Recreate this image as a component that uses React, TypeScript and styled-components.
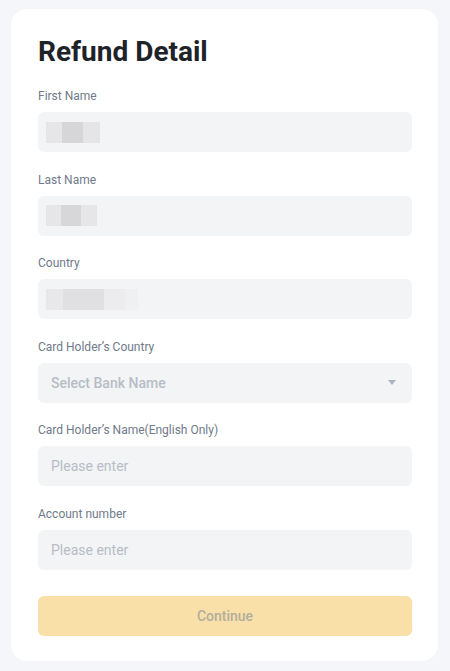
import React from 'react';
import styled, { createGlobalStyle } from 'styled-components';

const GlobalStyle = createGlobalStyle`
  html, body {
    margin: 0;
    padding: 0;
    background: #f5f6f9;
  }
  body {
    font-family: Roboto, 'Noto Sans', sans-serif;
    -webkit-font-smoothing: antialiased;
  }
`;

type Field = {
  label: string;
  kind: 'masked' | 'select' | 'text';
  value?: string;
  blocks?: { width: number; tone: string }[];
};

const fields: Field[] = [
  {
    label: 'First Name',
    kind: 'masked',
    blocks: [
      { width: 16, tone: '#e6e6e8' },
      { width: 21, tone: '#d6d6d9' },
      { width: 17, tone: '#e5e5e7' },
    ],
  },
  {
    label: 'Last Name',
    kind: 'masked',
    blocks: [
      { width: 15, tone: '#e6e6e8' },
      { width: 20, tone: '#d7d7da' },
      { width: 16, tone: '#e6e6e8' },
    ],
  },
  {
    label: 'Country',
    kind: 'masked',
    blocks: [
      { width: 17, tone: '#e8e8ea' },
      { width: 41, tone: '#e0e0e3' },
      { width: 21, tone: '#ececee' },
      { width: 13, tone: '#f0f0f2' },
    ],
  },
  { label: 'Card Holder’s Country', kind: 'select', value: 'Select Bank Name' },
  { label: 'Card Holder’s Name(English Only)', kind: 'text', value: 'Please enter' },
  { label: 'Account number', kind: 'text', value: 'Please enter' },
];

export default function App() {
  return (
    <>
      <GlobalStyle />
      <StyledPage>
        <StyledCard>
          <StyledTitle>Refund Detail</StyledTitle>
          <StyledFields>
            {fields.map((field) => (
              <StyledField key={field.label}>
                <StyledLabel>{field.label}</StyledLabel>
                <StyledInputBox>
                  {field.kind === 'masked' && (
                    <StyledMask>
                      {field.blocks!.map((b, i) => (
                        <StyledMaskBlock key={i} $width={b.width} $tone={b.tone} />
                      ))}
                    </StyledMask>
                  )}
                  {field.kind === 'select' && (
                    <>
                      <StyledSelectText>{field.value}</StyledSelectText>
                      <StyledCaret />
                    </>
                  )}
                  {field.kind === 'text' && <StyledPlaceholder>{field.value}</StyledPlaceholder>}
                </StyledInputBox>
              </StyledField>
            ))}
          </StyledFields>
          <StyledButton disabled>Continue</StyledButton>
        </StyledCard>
      </StyledPage>
    </>
  );
}

const StyledPage = styled.div`
  padding: 9px 12px 10px 11px;
`;

const StyledCard = styled.div`
  background: #ffffff;
  border-radius: 16px;
  padding: 25px 26px 25px 27px;
  display: flex;
  flex-direction: column;
`;

const StyledTitle = styled.h1`
  margin: 0 0 17px;
  font-size: 28px;
  line-height: 36px;
  font-weight: 700;
  color: #1e2329;
`;

const StyledFields = styled.div`
  display: flex;
  flex-direction: column;
  gap: 18.6px;
`;

const StyledField = styled.div`
  display: flex;
  flex-direction: column;
  gap: 7px;
`;

const StyledLabel = styled.div`
  font-size: 12px;
  line-height: 18px;
  color: #707a8a;
`;

const StyledInputBox = styled.div`
  height: 40px;
  border-radius: 6px;
  background: #f3f4f6;
  display: flex;
  align-items: center;
  padding: 0 14px 0 13px;
  box-sizing: border-box;
`;

const StyledMask = styled.div`
  display: flex;
  height: 21px;
  margin-left: -5px;
  filter: blur(0.6px);
`;

const StyledMaskBlock = styled.div<{ $width: number; $tone: string }>`
  width: ${(p) => p.$width}px;
  background: ${(p) => p.$tone};
`;

const StyledSelectText = styled.span`
  flex: 1;
  font-size: 14px;
  font-weight: 500;
  color: #b7bdc6;
`;

const StyledCaret = styled.span`
  width: 0;
  height: 0;
  border-left: 4px solid transparent;
  border-right: 4px solid transparent;
  border-top: 5px solid #aeb4bc;
  margin-right: 2px;
`;

const StyledPlaceholder = styled.span`
  font-size: 14px;
  color: #b7bdc6;
`;

const StyledButton = styled.button`
  margin-top: 26px;
  height: 40px;
  border: none;
  border-radius: 6px;
  background: #f8e0a8;
  color: #b3ae9c;
  font-family: Roboto, 'Noto Sans', sans-serif;
  font-size: 14px;
  font-weight: 500;
`;
